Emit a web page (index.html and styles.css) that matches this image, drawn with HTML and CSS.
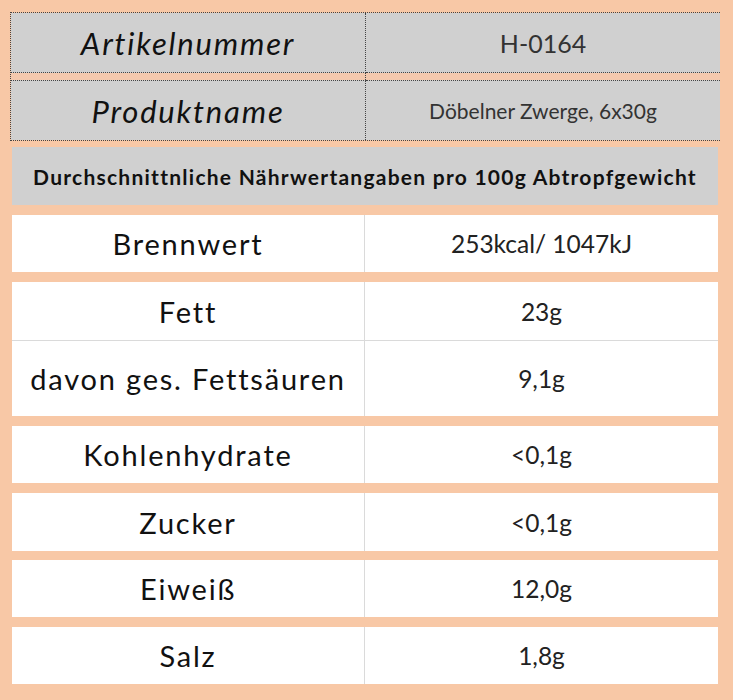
FILE: index.html
```html
<!DOCTYPE html>
<html lang="de">
<head>
<meta charset="utf-8">
<title>Nährwertangaben</title>
<link rel="stylesheet" href="styles.css">
</head>
<body>
<div class="sheet">
  <div class="info">
    <div class="icell ilabel r1">Artikelnummer</div>
    <div class="icell ivalue r1">H-0164</div>
    <div class="igap gl"></div>
    <div class="igap"></div>
    <div class="icell ilabel r2">Produktname</div>
    <div class="icell ivalue small r2">Döbelner Zwerge, 6x30g</div>
  </div>
  <div class="header">Durchschnittnliche Nährwertangaben pro 100g Abtropfgewicht</div>
  <div class="row"><div class="label">Brennwert</div><div class="value">253kcal/ 1047kJ</div></div>
  <div class="group">
    <div class="row sub"><div class="label">Fett</div><div class="value">23g</div></div>
    <div class="row sub tall"><div class="label">davon ges. Fettsäuren</div><div class="value">9,1g</div></div>
  </div>
  <div class="row"><div class="label">Kohlenhydrate</div><div class="value">&lt;0,1g</div></div>
  <div class="row sub"><div class="label">Zucker</div><div class="value">&lt;0,1g</div></div>
  <div class="row near"><div class="label">Eiweiß</div><div class="value">12,0g</div></div>
  <div class="row"><div class="label">Salz</div><div class="value">1,8g</div></div>
</div>
</body>
</html>
```
FILE: styles.css
```css
html, body {
  margin: 0;
  padding: 0;
  background: #f8c8a6;
}
body {
  width: 733px;
  height: 700px;
  overflow: hidden;
  font-family: Lato, "Open Sans", sans-serif;
  color: #111;
}
.sheet {
  width: 710px;
  padding: 12px 0 0 10px;
  display: flex;
  flex-direction: column;
}
.info {
  display: grid;
  grid-template-columns: 355px 354px;
  grid-template-rows: 60px 7px 60px;
  border: 1px dotted #444;
}
.icell {
  background: #d0d0d0;
  display: flex;
  align-items: center;
  justify-content: center;
}
.icell.r1 { border-bottom: 1px dotted #444; }
.icell.r2 { border-top: 1px dotted #444; }
.icell.ilabel, .igap.gl { border-right: 1px dotted #444; }
.igap { background: #f4c9ae; }
.ilabel {
  font-style: italic;
  font-size: 31px;
  letter-spacing: 1.8px;
  color: #111;
}
.ivalue {
  font-size: 25px;
  color: #333;
}
.ivalue.small {
  font-size: 21px;
}
.header {
  margin: 6px 2px 0 2px;
  height: 58px;
  background: #d0d0d0;
  display: flex;
  align-items: center;
  justify-content: center;
  font-weight: bold;
  font-size: 21px;
  letter-spacing: 1.25px;
  color: #111;
}
.row {
  margin: 10px 2px 0 2px;
  height: 57px;
  background: #fff;
  display: grid;
  grid-template-columns: 353px 353px;
}
.row.near { margin-top: 9px; }
.group {
  margin: 10px 2px 0 2px;
  display: flex;
  flex-direction: column;
}
.group .row { margin: 0; }
.row.sub { height: 58px; }
.row.tall { height: 76px; border-top: 1px solid #dadada; box-sizing: border-box; }
.label, .value {
  display: flex;
  align-items: center;
  justify-content: center;
}
.label {
  border-right: 1px solid #dadada;
  font-size: 29px;
  letter-spacing: 1.8px;
  color: #111;
}
.value {
  font-size: 24.5px;
  color: #222;
}
```
